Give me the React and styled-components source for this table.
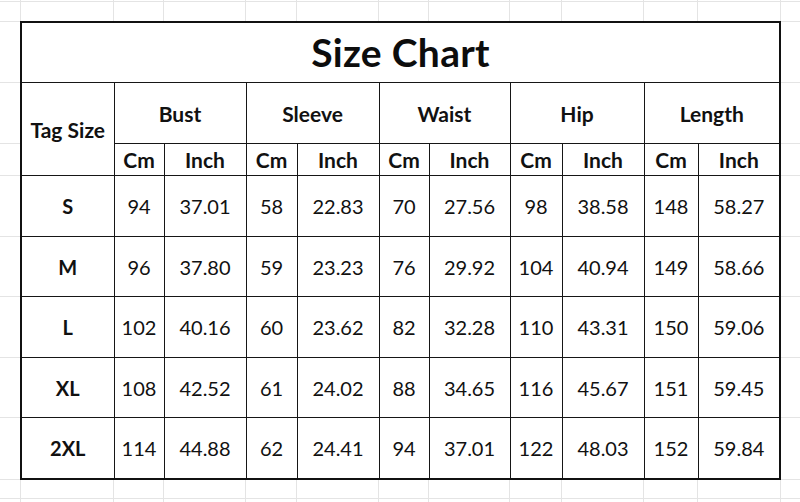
import React from 'react';
import styled, { createGlobalStyle } from 'styled-components';

// spreadsheet grid behind the chart (column / row edges in px)
const gridX = [20, 113, 163, 245, 296, 378, 428, 509, 561, 643, 697, 780];
const gridY = [1, 21, 82, 143, 175, 236, 296, 357, 417, 479, 498];

const gridLines = [
  ...gridX.map((x) => `linear-gradient(#e4e4e4, #e4e4e4) ${x}px 0 / 1px 100% no-repeat`),
  ...gridY.map((y) => `linear-gradient(#e4e4e4, #e4e4e4) 0 ${y}px / 100% 1px no-repeat`),
].join(', ');

const GlobalStyle = createGlobalStyle`
  html, body {
    margin: 0;
    padding: 0;
    background: #fff;
  }
  body {
    font-family: Lato, "Liberation Sans", sans-serif;
    color: #111;
  }
`;

// the sheet the table sits on
const Sheet = styled.div`
  width: 800px;
  height: 502px;
  box-sizing: border-box;
  padding: 21px 0 0 20px;
  background: ${gridLines};
  background-color: #fff;
`;

const Table = styled.table`
  border-collapse: collapse;
  table-layout: fixed;
  width: 760px;
  background: #fff;
  border: 2px solid #111;
`;

const Cell = styled.td`
  border: 1px solid #161616;
  padding: 0;
  text-align: center;
  vertical-align: middle;
  height: ${(p) => p.$h || 59}px;
  font-size: ${(p) => p.$size || 20}px;
  font-weight: ${(p) => (p.$bold ? 700 : 400)};
  color: #111;
  white-space: nowrap;
`;

const TitleCell = styled.th`
  height: 57px;
  padding: 0 0 2px;
  border: 1px solid #161616;
  font-size: 39px;
  font-weight: 700;
  color: #0d0d0d;
  letter-spacing: 0.3px;
`;

const cols = [93, 50, 82, 51, 82, 50, 81, 52, 82, 54, 82];
const groups = ['Bust', 'Sleeve', 'Waist', 'Hip', 'Length'];

const rows = [
  ['S', 94, '37.01', 58, '22.83', 70, '27.56', 98, '38.58', 148, '58.27'],
  ['M', 96, '37.80', 59, '23.23', 76, '29.92', 104, '40.94', 149, '58.66'],
  ['L', 102, '40.16', 60, '23.62', 82, '32.28', 110, '43.31', 150, '59.06'],
  ['XL', 108, '42.52', 61, '24.02', 88, '34.65', 116, '45.67', 151, '59.45'],
  ['2XL', 114, '44.88', 62, '24.41', 94, '37.01', 122, '48.03', 152, '59.84'],
];

const rowHeights = [60, 59, 60, 59, 60];

const App = () => {
  return (
    <>
      <GlobalStyle />
      <Sheet>
        <Table>
          <colgroup>
            {cols.map((w, i) => (
              <col key={i} style={{ width: w }} />
            ))}
          </colgroup>
          <thead>
            <tr>
              <TitleCell colSpan={11}>Size Chart</TitleCell>
            </tr>
            <tr>
              <Cell as="th" rowSpan={2} $bold $size={21}>Tag Size</Cell>
              {groups.map((g) => (
                <Cell as="th" key={g} colSpan={2} $bold $size={21} $h={60}>{g}</Cell>
              ))}
            </tr>
            <tr>
              {groups.map((g) => (
                <React.Fragment key={g}>
                  <Cell as="th" $bold $size={21} $h={31}>Cm</Cell>
                  <Cell as="th" $bold $size={21} $h={31}>Inch</Cell>
                </React.Fragment>
              ))}
            </tr>
          </thead>
          <tbody>
            {rows.map((r, i) => (
              <tr key={r[0]}>
                {r.map((v, j) => (
                  <Cell key={j} $bold={j === 0} $h={rowHeights[i]}>{v}</Cell>
                ))}
              </tr>
            ))}
          </tbody>
        </Table>
      </Sheet>
    </>
  );
};

export default App;
